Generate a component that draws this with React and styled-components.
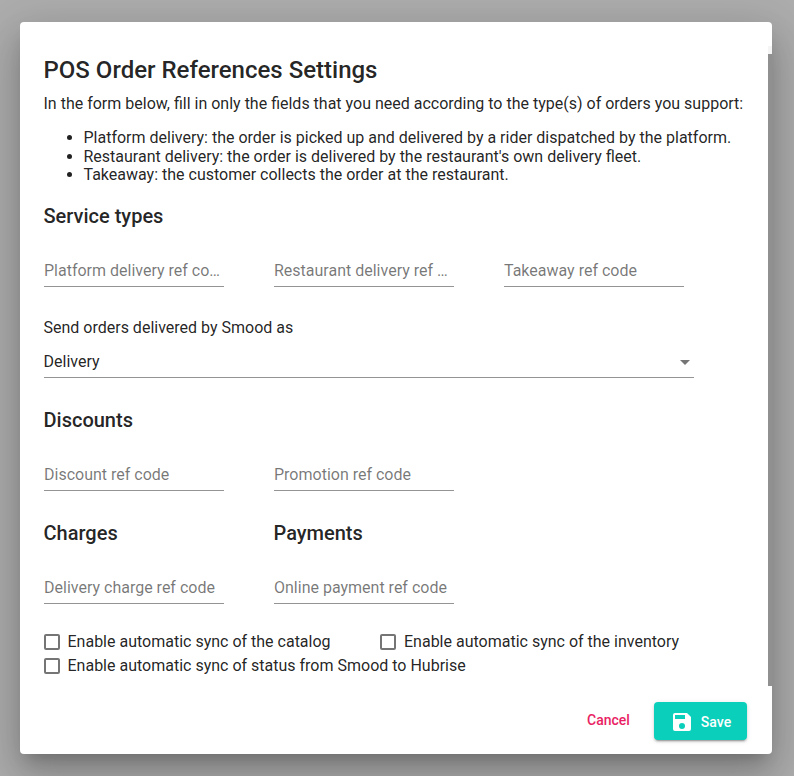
import React from "react";
import styled, { createGlobalStyle } from "styled-components";

const GlobalStyle = createGlobalStyle`
  * { box-sizing: border-box; }
  body {
    margin: 0;
    font-family: Roboto, "Liberation Sans", sans-serif;
    background: #adadad;
    color: rgba(0, 0, 0, 0.87);
    overflow: hidden;
  }
`;

const Backdrop = styled.div`
  height: 776px;
  padding: 22px 22px 22px 20px;
`;

const Dialog = styled.div`
  display: flex;
  flex-direction: column;
  height: 732px;
  background: #fff;
  border-radius: 4px;
  box-shadow: 0 11px 15px -7px rgba(0, 0, 0, 0.2),
    0 24px 38px 3px rgba(0, 0, 0, 0.14), 0 9px 46px 8px rgba(0, 0, 0, 0.12);
`;

const Body = styled.div`
  display: flex;
  height: 664px;
`;

const Content = styled.div`
  flex: 1;
  min-width: 0;
  padding: 32px 0 0 23.5px;
  white-space: nowrap;
`;

const Scrollbar = styled.div`
  width: 4px;
  margin-top: 24px;
  border-top: 8px solid #f5f5f5;
  background: #909090;
`;

const Title = styled.h1`
  margin: 0;
  font-size: 24px;
  line-height: 32px;
  font-weight: 500;
`;

const Intro = styled.p`
  margin: 8px 0 0;
  font-size: 16px;
  line-height: 19px;
`;

const Types = styled.ul`
  margin: 16px 0 0;
  padding-left: 40px;
  font-size: 16px;
  line-height: 18.5px;
`;

const Heading = styled.h2`
  margin: 0;
  height: 32px;
  font-size: 20px;
  line-height: 32px;
  font-weight: 500;
`;

const Section = styled.section`
  margin-top: ${(p) => p.$top}px;
`;

const Columns = styled.div`
  display: grid;
  grid-template-columns: repeat(3, 180px);
  column-gap: 50px;
`;

const Input = styled.div`
  width: 180px;
  height: 31px;
  margin-top: 24px;
  padding: 4px 0 0 0.5px;
  border-bottom: 1px solid #949494;
  color: rgba(0, 0, 0, 0.54);
  font-size: 16px;
  line-height: 22px;
  overflow: hidden;
  text-overflow: ellipsis;
`;

const SelectLabel = styled.div`
  margin-top: 31px;
  font-size: 16px;
  line-height: 20px;
`;

const Select = styled.div`
  display: flex;
  justify-content: space-between;
  width: 650px;
  height: 31px;
  margin-top: 9px;
  padding: 5px 4px 0 0;
  border-bottom: 1px solid #949494;
  font-size: 16px;
  line-height: 20px;
`;

const Arrow = styled.span`
  width: 0;
  height: 0;
  margin-top: 8px;
  border: 5px solid transparent;
  border-top-color: #757575;
  border-bottom: 0;
`;

const Checks = styled.div`
  display: grid;
  grid-template-columns: 336.5px auto;
  grid-auto-rows: 24px;
  margin-top: 26px;
`;

const Check = styled.label`
  display: flex;
  align-items: center;
  gap: 8px;
  font-size: 16px;
  line-height: 24px;
`;

const Box = styled.span`
  flex: none;
  width: 16px;
  height: 16px;
  border: 2px solid #757575;
  border-radius: 2px;
`;

const Actions = styled.footer`
  display: flex;
  justify-content: flex-end;
  align-items: flex-start;
  padding: 16px 25px 0 0;
`;

const Button = styled.button`
  display: flex;
  align-items: center;
  justify-content: center;
  width: ${(p) => (p.$primary ? 93 : 91)}px;
  height: ${(p) => (p.$primary ? 38 : 36)}px;
  padding: ${(p) => (p.$primary ? "2px 0 0" : "0")};
  border: 0;
  border-radius: 4px;
  gap: 7px;
  font: 500 14px Roboto, sans-serif;
  color: ${(p) => (p.$primary ? "#fff" : "#e91e63")};
  background: ${(p) => (p.$primary ? "#0acfba" : "transparent")};
  box-shadow: ${(p) =>
    p.$primary
      ? "0 3px 1px -2px rgba(0,0,0,.2), 0 2px 2px rgba(0,0,0,.14), 0 1px 5px rgba(0,0,0,.12)"
      : "none"};
`;

const Field = ({ label }) => <Input>{label}</Input>;

const Option = ({ children }) => (
  <Check>
    <Box />
    {children}
  </Check>
);

export default function App() {
  return (
    <Backdrop>
      <GlobalStyle />
      <Dialog role="dialog">
        <Body>
          <Content>
            <Title>POS Order References Settings</Title>
            <Intro>
              In the form below, fill in only the fields that you need according to the type(s) of orders you support:
            </Intro>
            <Types>
              <li>Platform delivery: the order is picked up and delivered by a rider dispatched by the platform.</li>
              <li>Restaurant delivery: the order is delivered by the restaurant's own delivery fleet.</li>
              <li>Takeaway: the customer collects the order at the restaurant.</li>
            </Types>
            <Section $top={15.5}>
              <Heading>Service types</Heading>
              <Columns>
                <Field label="Platform delivery ref code" />
                <Field label="Restaurant delivery ref code" />
                <Field label="Takeaway ref code" />
              </Columns>
              <SelectLabel>Send orders delivered by Smood as</SelectLabel>
              <Select>
                Delivery
                <Arrow />
              </Select>
            </Section>
            <Section $top={26}>
              <Heading>Discounts</Heading>
              <Columns>
                <Field label="Discount ref code" />
                <Field label="Promotion ref code" />
              </Columns>
            </Section>
            <Section $top={26}>
              <Columns>
                <Heading>Charges</Heading>
                <Heading>Payments</Heading>
              </Columns>
              <Columns>
                <Field label="Delivery charge ref code" />
                <Field label="Online payment ref code" />
              </Columns>
            </Section>
            <Checks>
              <Option>Enable automatic sync of the catalog</Option>
              <Option>Enable automatic sync of the inventory</Option>
              <Option>Enable automatic sync of status from Smood to Hubrise</Option>
            </Checks>
          </Content>
          <Scrollbar />
        </Body>
        <Actions>
          <Button>Cancel</Button>
          <Button $primary>
            <svg width="24" height="24" viewBox="0 0 24 24" fill="currentColor">
              <path d="M17 3H5a2 2 0 0 0-2 2v14a2 2 0 0 0 2 2h14a2 2 0 0 0 2-2V7l-4-4zm-5 16a3 3 0 1 1 0-6 3 3 0 0 1 0 6zm3-10H5V5h10v4z" />
            </svg>
            Save
          </Button>
        </Actions>
      </Dialog>
    </Backdrop>
  );
}
